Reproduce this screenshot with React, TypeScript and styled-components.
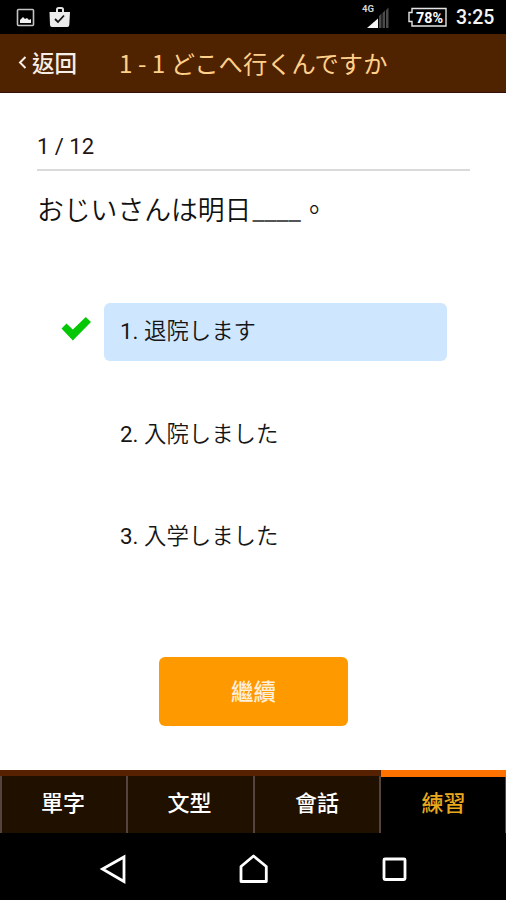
import React from "react";
import styled, { createGlobalStyle } from "styled-components";

const GlobalStyle = createGlobalStyle`
  * { box-sizing: border-box; }
  body {
    margin: 0;
    background: #fff;
    font-family: Roboto, "Noto Sans CJK JP", sans-serif;
  }
  button { font: inherit; border: 0; padding: 0; background: none; color: inherit; text-align: left; }
`;

const Screen = styled.div`
  width: 506px;
  height: 900px;
  display: flex;
  flex-direction: column;
  background: #fff;
  overflow: hidden;
`;

const StatusBar = styled.div`
  height: 34px;
  flex: none;
  display: flex;
  align-items: center;
  justify-content: space-between;
  background: #000;
`;

const StatusGroup = styled.div`
  height: 34px;
  display: flex;
`;

const Header = styled.header`
  height: 59px;
  flex: none;
  display: flex;
  align-items: center;
  padding-bottom: 1px;
  background: #4f2200;
  border-bottom: 1px solid #35100a;
`;

const BackButton = styled.button`
  width: 119px;
  padding: 0 0 2px 17px;
  display: flex;
  align-items: center;
  color: #f7eee8;
  font: 500 22.5px/34px "Noto Sans CJK TC", sans-serif;
  gap: 5px;
`;

const Title = styled.h1`
  margin: 0;
  color: #ffd08a;
  font: 400 24.3px/34px "Noto Sans CJK JP", sans-serif;
  white-space: nowrap;
`;

const Content = styled.main`
  flex: 1;
  display: flex;
  flex-direction: column;
  padding: 39px 36px 0 37px;
`;

const Progress = styled.div`
  height: 39px;
  padding-top: 1px;
  border-bottom: 2px solid #dadada;
  color: #241412;
  font-size: 22px;
  line-height: 27px;
`;

const Question = styled.p`
  margin: 18px 0 0;
  height: 40px;
  color: #111;
  font-size: 26.8px;
  font-weight: 350;
  line-height: 40px;
  white-space: nowrap;
`;

const Blank = styled.span`
  color: #555;
  font-weight: 400;
  margin-left: 1px;
`;

const FullStop = styled.span`
  font-family: "Noto Sans CJK TC", sans-serif;
`;

const Options = styled.div`
  display: flex;
  flex-direction: column;
  gap: 45px;
  margin-top: 74px;
`;

const OptionRow = styled.div`
  display: grid;
  grid-template-columns: 67px 343px;
  align-items: center;
`;

const OptionButton = styled.button<{ $selected?: boolean }>`
  height: 57.5px;
  padding: 0 16px;
  border-radius: 6px;
  background: ${(p) => (p.$selected ? "#cee7ff" : "transparent")};
  color: #161616;
  font-size: 22.4px;
  font-weight: 350;
  line-height: 57px;
  white-space: pre;
`;

const OptionNumber = styled.span`
  font-weight: 400;
`;

const ContinueButton = styled.button`
  align-self: center;
  width: 189px;
  height: 69px;
  margin-top: 91px;
  border-radius: 6px;
  background: #ff9900;
  color: #fff0dc;
  text-align: center;
  padding-bottom: 2px;
  font: 500 22.5px/67px "Noto Sans CJK TC", sans-serif;
`;

const Tabs = styled.nav`
  height: 63px;
  flex: none;
  display: grid;
  grid-template-columns: 126px 127px 128px 125px;
  background: #000;
`;

const Tab = styled.button<{ $active?: boolean }>`
  border-top: ${(p) => (p.$active ? "7px solid #ff7200" : "6px solid #552100")};
  background: ${(p) => (p.$active ? "#000" : "#201000")};
  background-clip: padding-box;
  color: ${(p) => (p.$active ? "#e9a91d" : "#fff")};
  box-shadow: ${(p) => (p.$active ? "inset -1px 0 #55483f" : "inset 2px 0 #54443f")};
  padding-bottom: ${(p) => (p.$active ? "9px" : "8px")};
  text-align: center;
  font: 500 22px/48px "Noto Sans CJK TC", sans-serif;
  &:nth-child(3) { box-shadow: inset 2px 0 #54443f, inset -2px 0 #54443f; }
`;

const SystemNav = styled.div`
  height: 67px;
  flex: none;
  display: flex;
  background: #000;
`;

const options = ["退院します", "入院しました", "入学しました"];
const tabs = ["單字", "文型", "會話", "練習"];

const NotificationIcons = () => (
  <svg width="80" height="34" viewBox="0 0 80 34">
    <rect x="17.5" y="9.5" width="16" height="16" rx="1" fill="none" stroke="#c4c4c4" strokeWidth="1.6" />
    <path d="M20 23v-3l3-3 2 2 2-1 2 2 2-1v4z" fill="#f2f2f2" />
    <path d="M57 12V9.5Q57 8 58.5 8h3Q63 8 63 9.5V12" fill="none" stroke="#e2e2e2" strokeWidth="2" />
    <path d="M49.5 12h20.5l-.7 13q-.1 2-2 2H52q-1.8 0-2-2z" fill="#ececec" />
    <path d="M55 19l3 3 6-6.5" fill="none" stroke="#151515" strokeWidth="1.8" />
  </svg>
);

const SignalIcon = () => (
  <svg width="48" height="34" viewBox="360 0 48 34">
    <text x="365" y="12" fill="#d4d4d4" fontFamily="Roboto, sans-serif" fontSize="9.5" fontWeight="700" textLength="12">4G</text>
    <path d="M370 28l11-9.5V28z" fill="#f4f4f4" />
    <path d="M382 28V16l2.5-2.500V28zM385.500 28V13l2.500-2.500V28zM389 28V10l2.500-2.500V28z" fill="#4a4a4a" />
  </svg>
);

const BatteryIcon = () => (
  <svg width="45" height="34" viewBox="405 0 45 34">
    <path d="M412 8.5h34v17.5h-34v-4.5h-3v-9h3z" fill="none" stroke="#e5e5e5" strokeWidth="1.4" />
    <text x="416" y="22.5" fill="#fff" fontFamily="Roboto, sans-serif" fontSize="14.5" fontWeight="700" textLength="27" lengthAdjust="spacingAndGlyphs">78%</text>
  </svg>
);

const Clock = styled.span`
  width: 50px;
  margin-left: 6px;
  padding-top: 1px;
  color: #f4f4f4;
  font-size: 19.5px;
  font-weight: 500;
  line-height: 34px;
`;

const BackChevron = () => (
  <svg width="10" height="20" viewBox="0 0 10 20">
    <path d="M8.5 5L3 10.5 8.5 16" fill="none" stroke="#f7eee8" strokeWidth="2" />
  </svg>
);

const CheckSlot = styled.span`
  display: flex;
  padding: 0 0 6px 24px;
`;

const CheckIcon = () => (
  <svg width="30" height="24" viewBox="0 0 30 24">
    <path d="M.5 11.5L5.500 6.500l6.300 6L24.800 0 30 5 11.800 23.500z" fill="#06c706" />
  </svg>
);

const SystemIcons = () => (
  <svg width="506" height="67" viewBox="0 833 506 67" fill="none" stroke="#fff" strokeWidth="2.8">
    <path d="M124 857v24.5l-21.5-12.500z" />
    <path d="M241 881.5v-15l12.5-10.500 12.800 10.500v15z" strokeLinejoin="round" />
    <rect x="384" y="859" width="21" height="20.5" rx="1" />
  </svg>
);

export default function App() {
  return (
    <>
      <GlobalStyle />
      <Screen>
        <StatusBar>
          <NotificationIcons />
          <StatusGroup>
            <SignalIcon />
            <BatteryIcon />
            <Clock>3:25</Clock>
          </StatusGroup>
        </StatusBar>
        <Header>
          <BackButton>
            <BackChevron />
            返回
          </BackButton>
          <Title>1 - 1 どこへ行くんですか</Title>
        </Header>
        <Content>
          <Progress>1 / 12</Progress>
          <Question>
            おじいさんは明日<Blank>____</Blank>
            <FullStop lang="zh-Hant">。</FullStop>
          </Question>
          <Options>
            {options.map((option, i) => (
              <OptionRow key={option}>
                <CheckSlot>{i === 0 && <CheckIcon />}</CheckSlot>
                <OptionButton $selected={i === 0}>
                  <OptionNumber>{`${i + 1}. `}</OptionNumber>
                  {option}
                </OptionButton>
              </OptionRow>
            ))}
          </Options>
          <ContinueButton>繼續</ContinueButton>
        </Content>
        <Tabs>
          {tabs.map((tab) => (
            <Tab key={tab} $active={tab === "練習"}>{tab}</Tab>
          ))}
        </Tabs>
        <SystemNav>
          <SystemIcons />
        </SystemNav>
      </Screen>
    </>
  );
}
